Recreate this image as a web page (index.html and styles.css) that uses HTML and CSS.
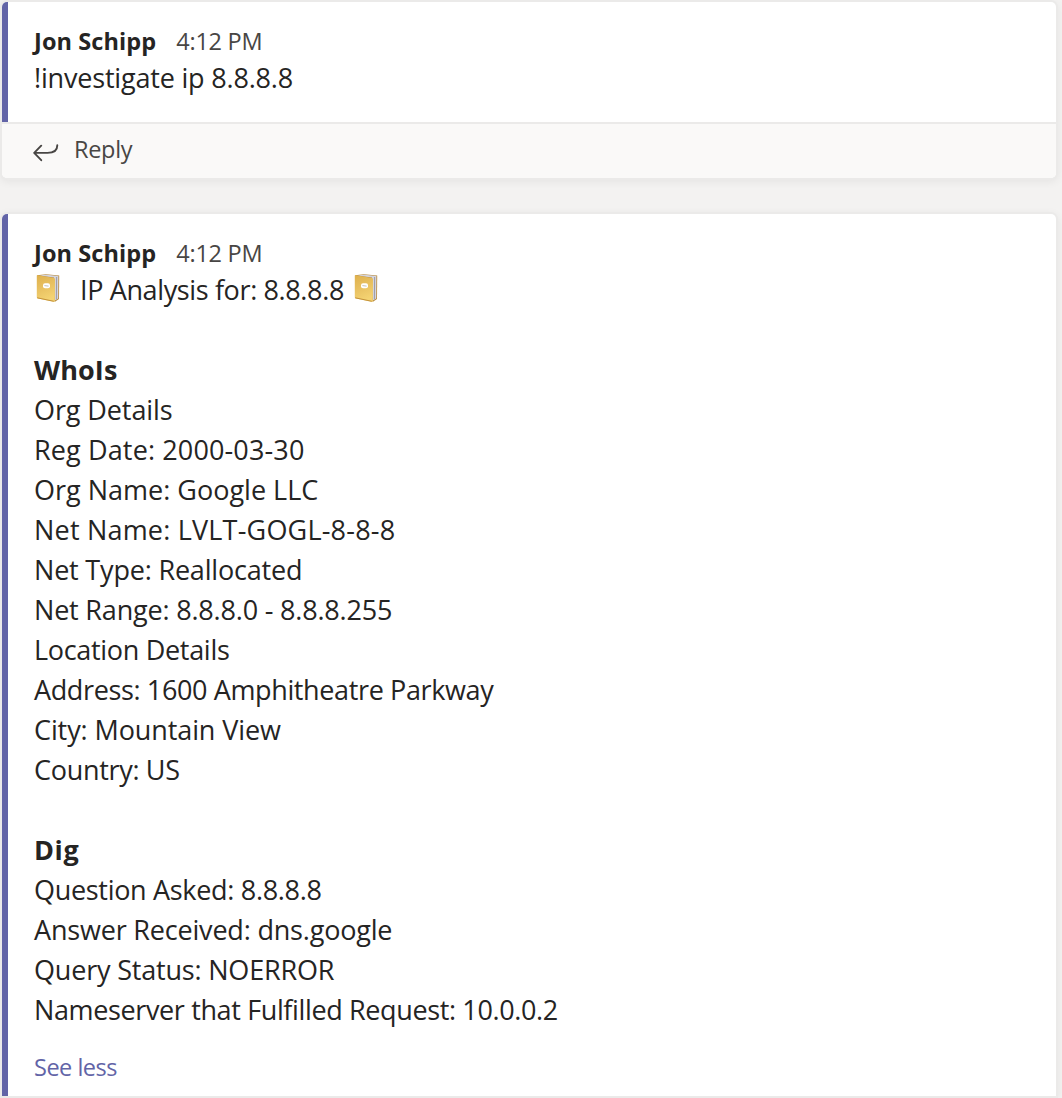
FILE: index.html
```html
<!DOCTYPE html>
<html lang="en">
<head>
<meta charset="utf-8">
<title>Conversation</title>
<link rel="stylesheet" href="styles.css">
</head>
<body>
<svg class="defs" aria-hidden="true">
  <defs>
    <linearGradient id="cover" x1="0" y1="0" x2="0.3" y2="1">
      <stop offset="0" stop-color="#deb04c"/>
      <stop offset="0.5" stop-color="#e8c060"/>
      <stop offset="1" stop-color="#f4d372"/>
    </linearGradient>
    <symbol id="book" viewBox="0 0 28 32">
      <path d="M3 3.2 L12 2.2 L25.2 3.6 L25 27 L21 29.8 L18 28Z" fill="#b98a3c"/>
      <path d="M5 3.5 L12.5 2.7 L24.4 4.1 L24.2 26.4 L20.8 28.6 L20 5.5Z" fill="#d4d4dc"/>
      <path d="M22.6 5 L22.4 27.2" stroke="#9c9ca8" stroke-width="1" fill="none"/>
      <path d="M2.8 3.4 Q3 3 4 3.3 L20 6 Q21 6.2 21 7.2 L20.8 29 Q20.7 30.1 19.5 29.8 L3.7 26.4 Q2.8 26.2 2.8 25.3Z" fill="url(#cover)"/>
      <path d="M3.2 25.8 L19.8 29.3" stroke="#c3913a" stroke-width="1" fill="none"/>
      <rect x="9" y="11.3" width="7" height="5" rx="2" fill="#fff"/>
      <path d="M10.4 13.6 L14.6 14.1" stroke="#c4c0b4" stroke-width="1"/>
    </symbol>
  </defs>
</svg>
<main class="thread">
  <article class="card">
    <div class="message">
      <header class="meta"><b class="author">Jon Schipp</b><time class="time">4:12 PM</time></header>
      <p class="line snug">!investigate ip 8.8.8.8</p>
    </div>
    <footer class="reply">
      <svg class="reply-icon" viewBox="0 0 26 18"><path d="M8.2 1.7 L1.2 8.9 L8.2 16.2 M1.5 8.9 H14.5 C20.5 8.9 24.3 6.4 24.3 1.2"/></svg>
      <span class="reply-text">Reply</span>
    </footer>
  </article>
  <article class="card card-open">
    <div class="message">
      <header class="meta"><b class="author">Jon Schipp</b><time class="time">4:12 PM</time></header>
      <p class="line title tight"><svg class="book"><use href="#book"/></svg><span class="title-text">IP Analysis for: 8.8.8.8</span><svg class="book"><use href="#book"/></svg></p>
      <section class="section">
        <h2 class="line">WhoIs</h2>
        <p class="line close">Org Details</p>
        <p class="line loose">Reg Date: 2000-03-30</p>
        <p class="line">Org Name: Google LLC</p>
        <p class="line wide">Net Name: LVLT-GOGL-8-8-8</p>
        <p class="line snug">Net Type: Reallocated</p>
        <p class="line snug">Net Range: 8.8.8.0 - 8.8.8.255</p>
        <p class="line firm">Location Details</p>
        <p class="line tight">Address: 1600 Amphitheatre Parkway</p>
        <p class="line close">City: Mountain View</p>
        <p class="line firm">Country: US</p>
      </section>
      <section class="section">
        <h2 class="line heading-wide">Dig</h2>
        <p class="line firm">Question Asked: 8.8.8.8</p>
        <p class="line snug">Answer Received: dns.google</p>
        <p class="line snug">Query Status: NOERROR</p>
        <p class="line tight">Nameserver that Fulfilled Request: 10.0.0.2</p>
      </section>
      <a class="toggle">See less</a>
    </div>
  </article>
</main>
</body>
</html>
```
FILE: styles.css
```css
* { box-sizing: border-box; }

body {
  margin: 0;
  height: 1098px;
  overflow: hidden;
  background: #f3f2f1;
  color: #252423;
  font-family: "Open Sans", "Noto Sans", sans-serif;
}

.defs { position: absolute; width: 0; height: 0; }

.thread {
  display: flex;
  flex-direction: column;
  gap: 36px;
  padding: 2px 6px 2px 2px;
}

.card {
  border-radius: 5px;
  background: #fff;
  box-shadow: 0 0 0 2px #ebeae9, 0 2px 8px 2px rgba(0, 0, 0, 0.06);
  overflow: hidden;
}

.card-open {
  height: 882px;
  border-radius: 5px 5px 0 0;
}

.message {
  height: 120px;
  padding: 23px 26px 0;
  border-left: 6px solid #6264a7;
}

.card-open .message { height: 882px; }

.meta {
  display: flex;
  gap: 20px;
  height: 33px;
  line-height: 32px;
  font-size: 23.5px;
}

.author { font-weight: 700; letter-spacing: 0.1px; }
.time { color: #484644; letter-spacing: -0.25px; }

.line {
  margin: 0;
  height: 40px;
  line-height: 40px;
  font-size: 27px;
  font-weight: 400;
  white-space: nowrap;
}

h2.line { font-weight: 700; letter-spacing: 0.1px; }
h2.heading-wide { letter-spacing: 0.6px; }

/* Tracking steps for message lines */
.wide { letter-spacing: 0.2px; }
.loose { letter-spacing: 0.13px; }
.close { letter-spacing: -0.1px; }
.snug { letter-spacing: -0.19px; }
.firm { letter-spacing: -0.31px; }
.tight { letter-spacing: -0.37px; }

.title { display: flex; }
.book { width: 28px; height: 32px; margin-top: 2px; }
.title-text { margin: 0 8px 0 18px; }

.section { padding-top: 40px; }

.reply {
  display: flex;
  align-items: center;
  gap: 15px;
  height: 56px;
  padding: 0 0 4px 31px;
  border-top: 2px solid #ebeae9;
  background: #faf9f8;
  color: #484644;
  font-size: 23.5px;
}

.reply-text { letter-spacing: -0.3px; }

.reply-icon {
  width: 26px;
  height: 18px;
  margin-top: 7px;
  fill: none;
  stroke: #484644;
  stroke-width: 1.9;
  stroke-linecap: round;
  stroke-linejoin: round;
}

.toggle {
  display: block;
  margin-top: 21px;
  line-height: 32px;
  font-size: 23.5px;
  letter-spacing: -0.5px;
  color: #6264a7;
}
```
